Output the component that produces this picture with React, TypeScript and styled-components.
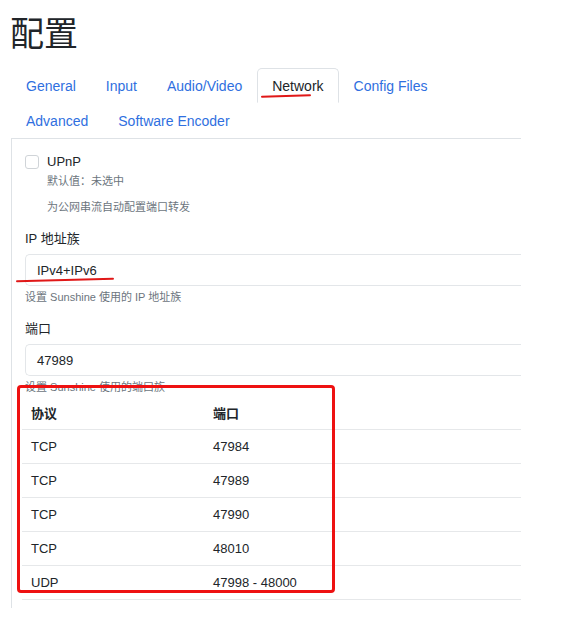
import React from 'react';
import styled, {createGlobalStyle} from 'styled-components';

const Global = createGlobalStyle`
  body { margin: 0; background: #fff; font-family: "Liberation Sans", "Noto Sans CJK SC", sans-serif; color: #212529; }
`;

const Page = styled.div` padding: 8px 0 0 10px; width: 511px; overflow: hidden; `;
const Title = styled.h1` margin: 0 0 12px; font-size: 34px; font-weight: 400; line-height: 48px; font-family: "Noto Sans CJK SC", sans-serif; `;
const Tabs = styled.div` display: flex; flex-wrap: wrap; padding-left: 1px; `;
const Tab = styled.div<{$active?: boolean}>`
  position: relative; height: 33px; padding: 0 14px; display: flex; align-items: center;
  font-size: 14px; color: ${({$active}) => $active ? '#212529' : '#2f6fe0'};
  border: 1px solid ${({$active}) => $active ? '#dee2e6' : 'transparent'};
  border-bottom-color: ${({$active}) => $active ? '#fff' : 'transparent'};
  border-radius: 5px 5px 0 0; background: #fff; z-index: 1;
`;
const Underline = styled.span<{$w: number; $l: number; $t: number}>`
  position: absolute; left: ${({$l}) => $l}px; top: ${({$t}) => $t}px; width: ${({$w}) => $w}px; height: 2px;
  background: #e01818; border-radius: 2px; transform: rotate(-1.5deg);
`;
const Card = styled.div` border-left: 1px solid #dee2e6; border-top: 1px solid #dee2e6; margin: 0 0 0 1px; padding: 15px 0 8px 13px; `;
const CheckRow = styled.div` display: flex; gap: 8px; `;
const Box = styled.span` width: 12px; height: 12px; border: 1px solid #d0d4d8; border-radius: 3px; margin-top: 1px; `;
const Label = styled.div` font-size: 13px; line-height: 16px; `;
const Small = styled.div<{$mt?: number}>` font-size: 11px; color: #6c757d; margin-top: ${({$mt}) => $mt ?? 3}px; line-height: 16px; `;
const FieldLabel = styled.div` font-size: 13px; margin: 16px 0 7px; line-height: 16px; `;
const Input = styled.div` position: relative; height: 30px; border: 1px solid #e3e6e9; border-right: none; border-radius: 5px 0 0 5px; padding-left: 11px; display: flex; align-items: center; font-size: 13px; `;
const Table = styled.div` position: relative; margin: 1px 0 0 -3px; `;
const Row = styled.div<{$head?: boolean}>` display: grid; grid-template-columns: 182px 1fr; height: 33px; align-items: center; padding-left: 9px; border-bottom: 1px solid #e6e8ea; font-size: 13px; font-weight: ${({$head}) => $head ? 700 : 400}; `;
const RedBox = styled.div` position: absolute; left: -5px; top: -11px; width: 312px; height: 202px; border: 3px solid #ee1111; border-radius: 4px; pointer-events: none; `;

const rows = [['TCP', '47984'], ['TCP', '47989'], ['TCP', '47990'], ['TCP', '48010'], ['UDP', '47998 - 48000']];

export default function App() {
  return (
    <Page>
      <Global/>
      <Title>配置</Title>
      <Tabs>
        <Tab>General</Tab><Tab>Input</Tab><Tab>Audio/Video</Tab>
        <Tab $active>Network<Underline $l={3} $t={26} $w={50}/></Tab>
        <Tab>Config Files</Tab><Tab>Advanced</Tab><Tab>Software Encoder</Tab>
      </Tabs>
      <Card>
        <CheckRow>
          <Box/>
          <div>
            <Label>UPnP</Label>
            <Small>默认值：未选中</Small>
            <Small $mt={10}>为公网串流自动配置端口转发</Small>
          </div>
        </CheckRow>
        <FieldLabel>IP 地址族</FieldLabel>
        <Input>IPv4+IPv6<Underline $l={-10} $t={24} $w={98}/></Input>
        <Small>设置 Sunshine 使用的 IP 地址族</Small>
        <FieldLabel>端口</FieldLabel>
        <Input>47989</Input>
        <Small>设置 Sunshine 使用的端口族</Small>
        <Table>
          <RedBox/>
          <Row $head><span>协议</span><span>端口</span></Row>
          {rows.map(([p, n], i) => <Row key={i}><span>{p}</span><span>{n}</span></Row>)}
        </Table>
      </Card>
    </Page>
  );
}
